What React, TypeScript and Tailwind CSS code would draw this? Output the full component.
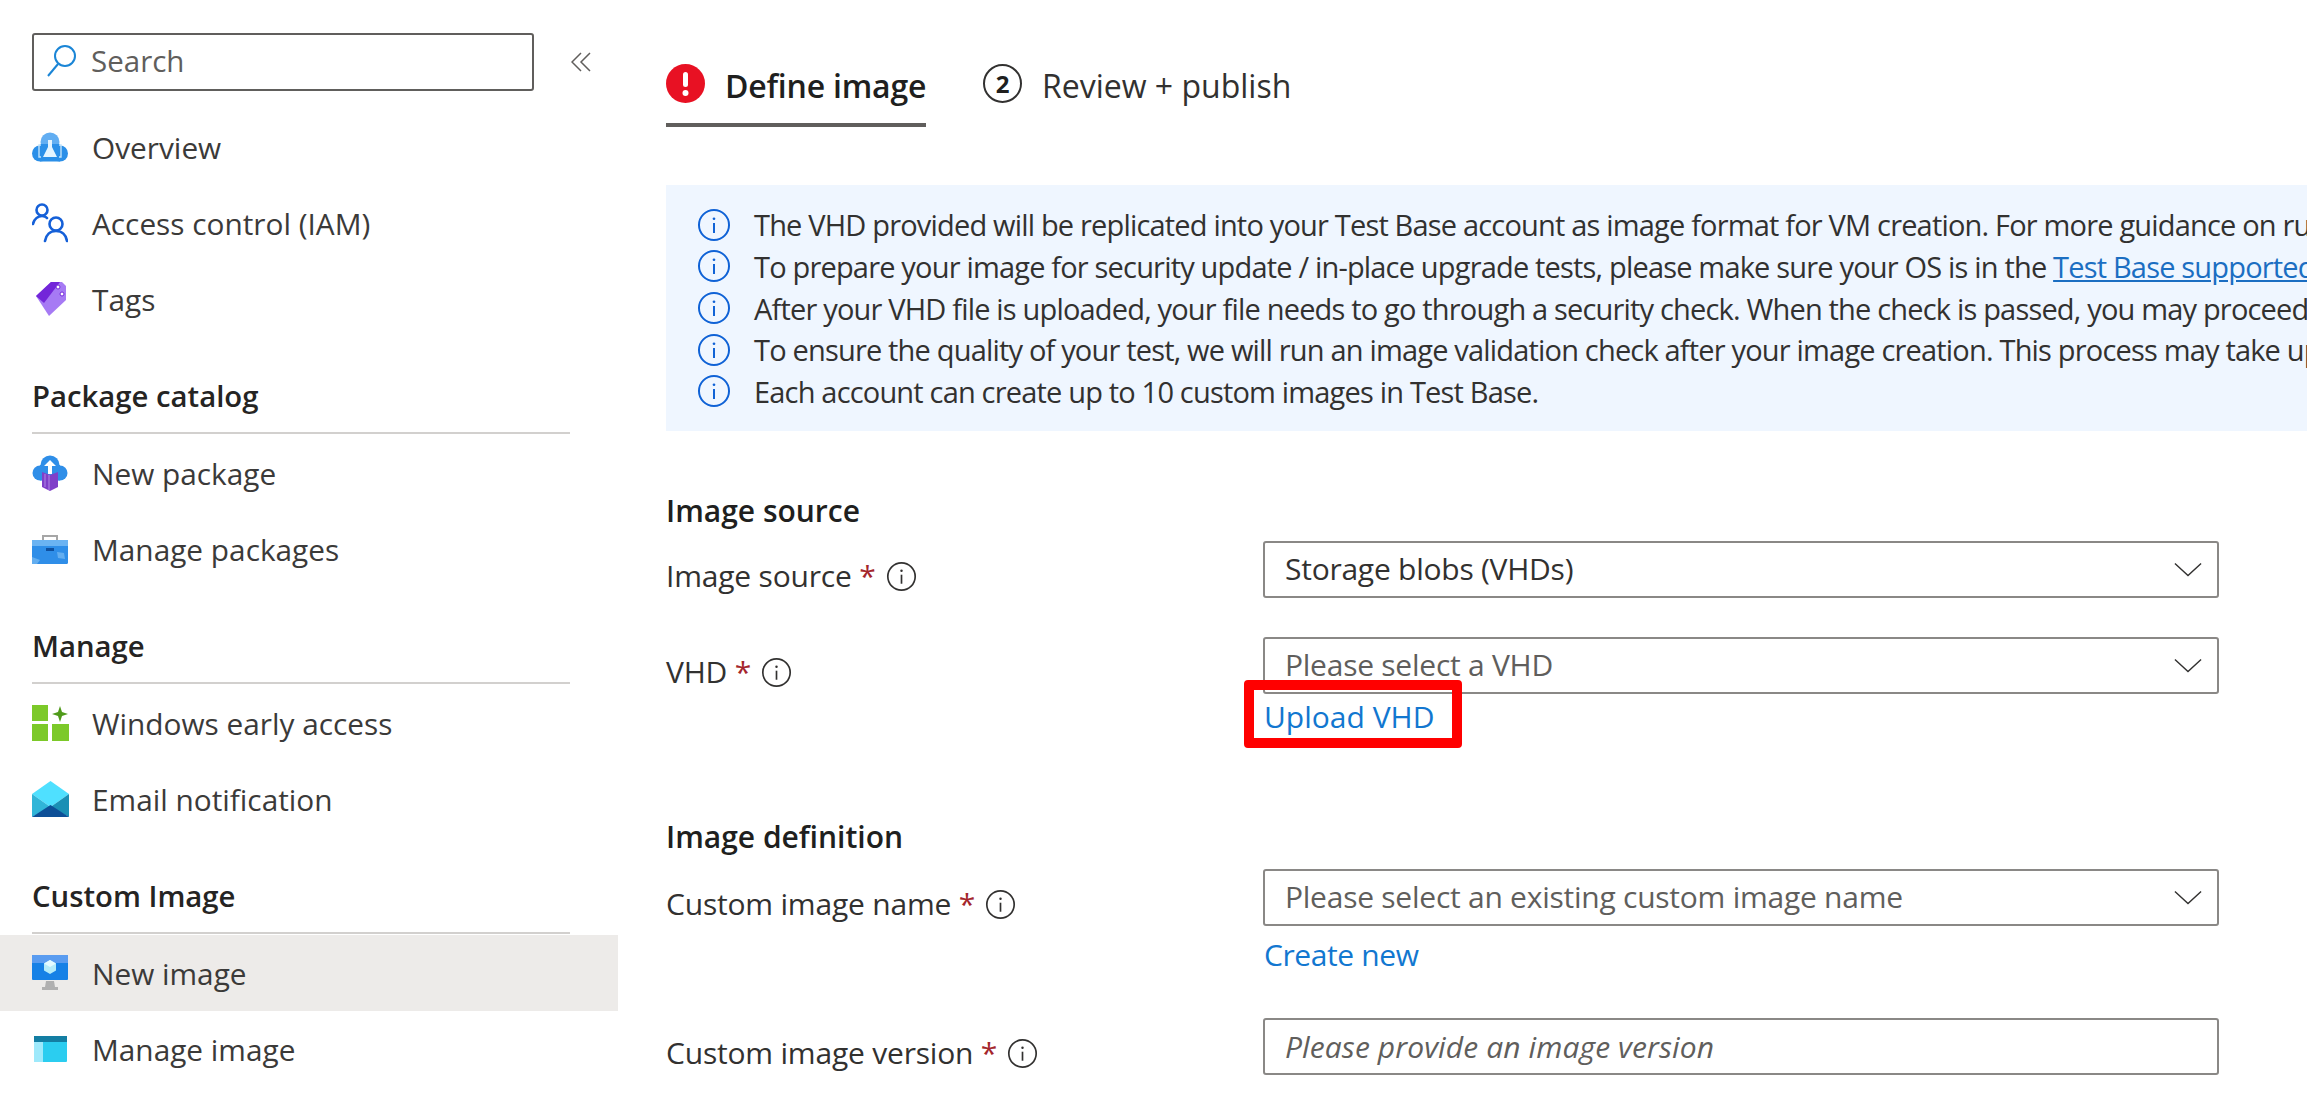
import type { ReactNode } from 'react';

const font = 'font-["Open_Sans","Liberation_Sans",sans-serif]';

function InfoIcon({ size = 34, color = '#0f62d6', stroke = 1.4 }: { size?: number; color?: string; stroke?: number }) {
  return (
    <svg width={size} height={size} viewBox="0 0 24 24" fill="none" className="shrink-0">
      <circle cx="12" cy="12" r="10.6" stroke={color} strokeWidth={stroke} />
      <circle cx="12" cy="7.6" r="0.95" fill={color} />
      <path d="M12 10.6v7" stroke={color} strokeWidth={stroke} />
    </svg>
  );
}

function OverviewIcon() {
  return (
    <svg width="36" height="30" viewBox="0 0 36 30">
      <circle cx="18" cy="10" r="9.500" fill="#62aef2" />
      <circle cx="8" cy="21.500" r="8" fill="#2b8fe8" />
      <circle cx="28" cy="21.500" r="8" fill="#2b8fe8" />
      <rect x="8" y="12" width="20" height="17.500" fill="#2b8fe8" />
      <path d="M16 8h4v7l5 10h-14l5-10z" fill="#e4f4ff" />
      <path d="M9 13H7v12h2M27 13h2v12h-2" stroke="#bfe2fb" strokeWidth="1.400" fill="none" />
    </svg>
  );
}

function PeopleIcon() {
  return (
    <svg width="36" height="40" viewBox="0 0 36 40" fill="none" stroke="#1560d8" strokeWidth="2.600" strokeLinecap="round">
      <circle cx="10" cy="7" r="5.500" />
      <path d="M1 21c1-5 5-8 9-8 2 0 4 .8 5 2" />
      <circle cx="24" cy="21" r="6.500" />
      <path d="M13 38c1-6 5-10 11-10s10 4 11 10" />
    </svg>
  );
}

function TagIcon() {
  return (
    <svg width="32" height="36" viewBox="0 0 32 36" className="ml-[3px]">
      <path d="M1 15 16 1h11l4 4v14L14 35z" fill="#a67af4" />
      <path d="M1 15 16 1h9L9 22z" fill="#7326d9" />
      <circle cx="23" cy="6" r="2" fill="#fff" stroke="#7326d9" />
      <circle cx="27" cy="13" r="2" fill="#fff" stroke="#7326d9" />
    </svg>
  );
}

function NewPackageIcon() {
  return (
    <svg width="36" height="36" viewBox="0 0 36 36">
      <circle cx="18" cy="10" r="9.500" fill="#2f8ee8" />
      <circle cx="8" cy="18" r="7.500" fill="#2f8ee8" />
      <circle cx="28" cy="18" r="7.500" fill="#2f8ee8" />
      <rect x="8" y="10" width="20" height="15.500" fill="#2f8ee8" />
      <path d="M10 17 18 20 26 17V32L18 36 10 32z" fill="#7f3fc9" />
      <path d="M13 19v13M17 20v15" stroke="#b28ae6" strokeWidth="1" />
      <path d="M18 5l6 6h-4v8h-4v-8h-4z" fill="#fff" />
    </svg>
  );
}

function BriefcaseIcon() {
  return (
    <svg width="36" height="30" viewBox="0 0 36 30">
      <path d="M11 7V2h14v5" fill="none" stroke="#a6a6a6" strokeWidth="2" />
      <rect x="0" y="6" width="36" height="24" rx="1.500" fill="#2f8ee8" />
      <rect x="0" y="6" width="36" height="6" fill="#6bb3f2" />
      <path d="M0 23l8 3-3 4H0zM25 18l7 1 1 6-7-1z" fill="#63aef0" />
      <rect x="14" y="14" width="8" height="3" fill="#0f4f9e" />
    </svg>
  );
}

function EarlyAccessIcon() {
  return (
    <svg width="37" height="36" viewBox="0 0 37 36">
      <rect x="0" y="0" width="16" height="16" fill="#7cc929" />
      <rect x="0" y="19" width="16" height="17" fill="#7cc929" />
      <rect x="20" y="19" width="17" height="17" fill="#7cc929" />
      <path d="M28 1l2 6 6 2-6 2-2 6-2-6-6-2 6-2z" fill="#4f9a1a" />
    </svg>
  );
}

function MailIcon() {
  return (
    <svg width="37" height="36" viewBox="0 0 37 36">
      <path d="M0 13 18.500 0 37 13 18.500 26z" fill="#4fe0ff" />
      <path d="M0 13 18.500 26 0 36z" fill="#30b5d8" />
      <path d="M37 13 18.500 26 37 36z" fill="#1a8fb5" />
      <path d="M0 36 18.500 24 37 36z" fill="#0d4f97" />
    </svg>
  );
}

function MonitorIcon() {
  return (
    <svg width="36" height="36" viewBox="0 0 36 36">
      <path d="M14 26h8l1 6h3v3H10v-3h3z" fill="#b0b0b0" />
      <rect x="0" y="0" width="36" height="25" rx="1" fill="#1681e6" />
      <rect x="0" y="0" width="36" height="8" fill="#5a9cf0" />
      <path d="M18 5l6 3.500v7L18 19l-6-3.500v-7z" fill="#b5ecf9" />
      <path d="M12 8.500 18 12l6-3.500L18 5z" fill="#e3fbff" />
    </svg>
  );
}

function WindowIcon() {
  return (
    <svg width="33" height="26" viewBox="0 0 33 26" className="ml-[2px]">
      <rect x="0" y="0" width="33" height="26" rx="1" fill="#2bcdf0" />
      <rect x="0" y="6" width="9" height="20" fill="#9ee9fb" />
      <rect x="0" y="0" width="33" height="6" fill="#137ea3" />
    </svg>
  );
}

function NavRow({ icon, label, active }: { icon: ReactNode; label: string; active?: boolean }) {
  return (
    <div className={`flex h-[76px] items-center pl-[32px] ${active ? 'bg-[#edebe9]' : ''}`}>
      <div className="flex w-[60px] shrink-0 items-center">{icon}</div>
      <span className="pt-[2px] text-[29.800px] leading-none text-[#3b3a39]">{label}</span>
    </div>
  );
}

function NavSection({ title, children }: { title: string; children: ReactNode }) {
  return (
    <div>
      <div className="mx-[32px] flex h-[97px] w-[538px] items-end border-b-2 border-[#d2d0ce] pb-[18px]">
        <span className="text-[29.300px] leading-[36px] font-semibold text-[#252423]">{title}</span>
      </div>
      <div className="mt-[1px]">{children}</div>
    </div>
  );
}

function Chevron() {
  return (
    <svg width="28" height="15" viewBox="0 0 30 16" fill="none" stroke="#323130" strokeWidth="1.500" className="shrink-0">
      <path d="M1 1.500 15 14.500 29 1.500" />
    </svg>
  );
}

function SelectBox({ text, placeholder }: { text: string; placeholder?: boolean }) {
  return (
    <div className="flex h-[57px] items-center justify-between rounded-[3px] border-2 border-[#8a8886] pr-[15px] pl-[20px]">
      <span className={`pb-[2px] text-[30px] leading-none tracking-[-0.25px] ${placeholder ? 'text-[#605e5c]' : 'text-[#323130]'}`}>{text}</span>
      <Chevron />
    </div>
  );
}

function FieldLabel({ text }: { text: string }) {
  return (
    <div className="flex h-[57px] w-[597px] shrink-0 items-center gap-[10px] pt-[13px]">
      <span className="text-[30px] leading-none tracking-[-0.2px] text-[#323130]">
        {text} <span className="text-[#a4262c]">*</span>
      </span>
      <InfoIcon size={31} color="#323130" stroke={1.300} />
    </div>
  );
}

const notices: ReactNode[] = [
  'The VHD provided will be replicated into your Test Base account as image format for VM creation. For more guidance on running your tests',
  <>
    To prepare your image for security update / in-place upgrade tests, please make sure your OS is in the{' '}
    <span className="text-[#1b6ec2] underline">Test Base supported list</span>
  </>,
  'After your VHD file is uploaded, your file needs to go through a security check. When the check is passed, you may proceed to the next step',
  'To ensure the quality of your test, we will run an image validation check after your image creation. This process may take up to a few hours',
  'Each account can create up to 10 custom images in Test Base.',
];

export default function App() {
  return (
    <div className={`flex h-[1115px] w-[2307px] overflow-hidden bg-white ${font}`}>
      <aside className="w-[618px] shrink-0 pt-[33px]">
        <div className="flex items-center">
          <div className="ml-[32px] flex h-[58px] w-[502px] items-center gap-[15px] rounded-[3px] border-2 border-[#605e5c] pb-[2px] pl-[12px]">
            <svg width="30" height="34" viewBox="0 0 30 34" fill="none" stroke="#1a85d6" strokeWidth="2">
              <circle cx="19" cy="12" r="10" />
              <path d="M12 20 2 32" />
            </svg>
            <span className="text-[29.500px] leading-none text-[#605e5c]">Search</span>
          </div>
          <svg width="20" height="20" viewBox="0 0 20 20" fill="none" stroke="#605e5c" strokeWidth="1.500" className="ml-[37px]">
            <path d="M10 1 1 10l9 9M19 1l-9 9 9 9" />
          </svg>
        </div>
        <div className="mt-[18px]">
          <NavRow icon={<OverviewIcon />} label="Overview" />
          <NavRow icon={<PeopleIcon />} label="Access control (IAM)" />
          <NavRow icon={<TagIcon />} label="Tags" />
        </div>
        <NavSection title="Package catalog">
          <NavRow icon={<NewPackageIcon />} label="New package" />
          <NavRow icon={<BriefcaseIcon />} label="Manage packages" />
        </NavSection>
        <NavSection title="Manage">
          <NavRow icon={<EarlyAccessIcon />} label="Windows early access" />
          <NavRow icon={<MailIcon />} label="Email notification" />
        </NavSection>
        <NavSection title="Custom Image">
          <NavRow icon={<MonitorIcon />} label="New image" active />
          <NavRow icon={<WindowIcon />} label="Manage image" />
        </NavSection>
      </aside>

      <main className="min-w-0 flex-1 pl-[48px]">
        <div className="flex h-[127px] items-start">
          <div className="flex h-full w-[260px] items-start gap-[20px] border-b-4 border-[#605e5c] pt-[64px]">
            <svg width="39" height="39" viewBox="0 0 39 39" className="shrink-0">
              <circle cx="19.500" cy="19.500" r="19.500" fill="#e81123" />
              <rect x="17" y="8" width="5" height="15" rx="2.500" fill="#fff" />
              <circle cx="19.500" cy="29" r="3" fill="#fff" />
            </svg>
            <span className="pt-[2px] text-[32px] leading-[39px] font-semibold tracking-[-0.2px] whitespace-nowrap text-[#201f1e]">Define image</span>
          </div>
          <div className="ml-[57px] flex items-start gap-[20px] pt-[64px]">
            <div className="flex h-[39px] w-[39px] items-center justify-center rounded-full border-2 border-[#323130] text-[24px] font-bold text-[#201f1e]">2</div>
            <span className="pt-[2px] text-[32px] leading-[39px] whitespace-nowrap text-[#323130]">Review + publish</span>
          </div>
        </div>

        <div className="mt-[58px] flex h-[246px] flex-col justify-center overflow-hidden bg-[#eff6ff] pl-[31px]">
          {notices.map((notice, i) => (
            <div key={i} className="flex h-[41.600px] items-center gap-[23px] whitespace-nowrap">
              <InfoIcon />
              <span className="text-[29px] leading-none tracking-[-0.82px] text-[#323130]">{notice}</span>
            </div>
          ))}
        </div>

        <h3 className="mt-[61px] text-[30px] leading-[38px] font-semibold text-[#201f1e]">Image source</h3>
        <div className="mt-[11px] flex">
          <FieldLabel text="Image source" />
          <div className="w-[956px]">
            <SelectBox text="Storage blobs (VHDs)" />
          </div>
        </div>
        <div className="mt-[39px] flex">
          <FieldLabel text="VHD" />
          <div className="relative w-[956px]">
            <SelectBox text="Please select a VHD" placeholder />
            <div className="mt-[4px] pl-[1px] text-[30px] leading-[38px] text-[#1277d0]">Upload VHD</div>
            <div className="absolute top-[43px] left-[-19px] h-[68px] w-[218px] rounded-[4px] border-[10px] border-[#ff0000]" />
          </div>
        </div>

        <h3 className="mt-[82px] text-[30px] leading-[38px] font-semibold text-[#201f1e]">Image definition</h3>
        <div className="mt-[13px] flex">
          <FieldLabel text="Custom image name" />
          <div className="w-[956px]">
            <SelectBox text="Please select an existing custom image name" placeholder />
            <div className="mt-[10px] pl-[1px] text-[30px] leading-[38px] tracking-[-0.4px] text-[#1277d0]">Create new</div>
          </div>
        </div>
        <div className="mt-[44px] flex">
          <FieldLabel text="Custom image version" />
          <div className="flex h-[57px] w-[956px] items-center rounded-[3px] border-2 border-[#8a8886] pl-[20px]">
            <span className="text-[30px] leading-none tracking-[0.1px] text-[#605e5c] italic">Please provide an image version</span>
          </div>
        </div>
      </main>
    </div>
  );
}
